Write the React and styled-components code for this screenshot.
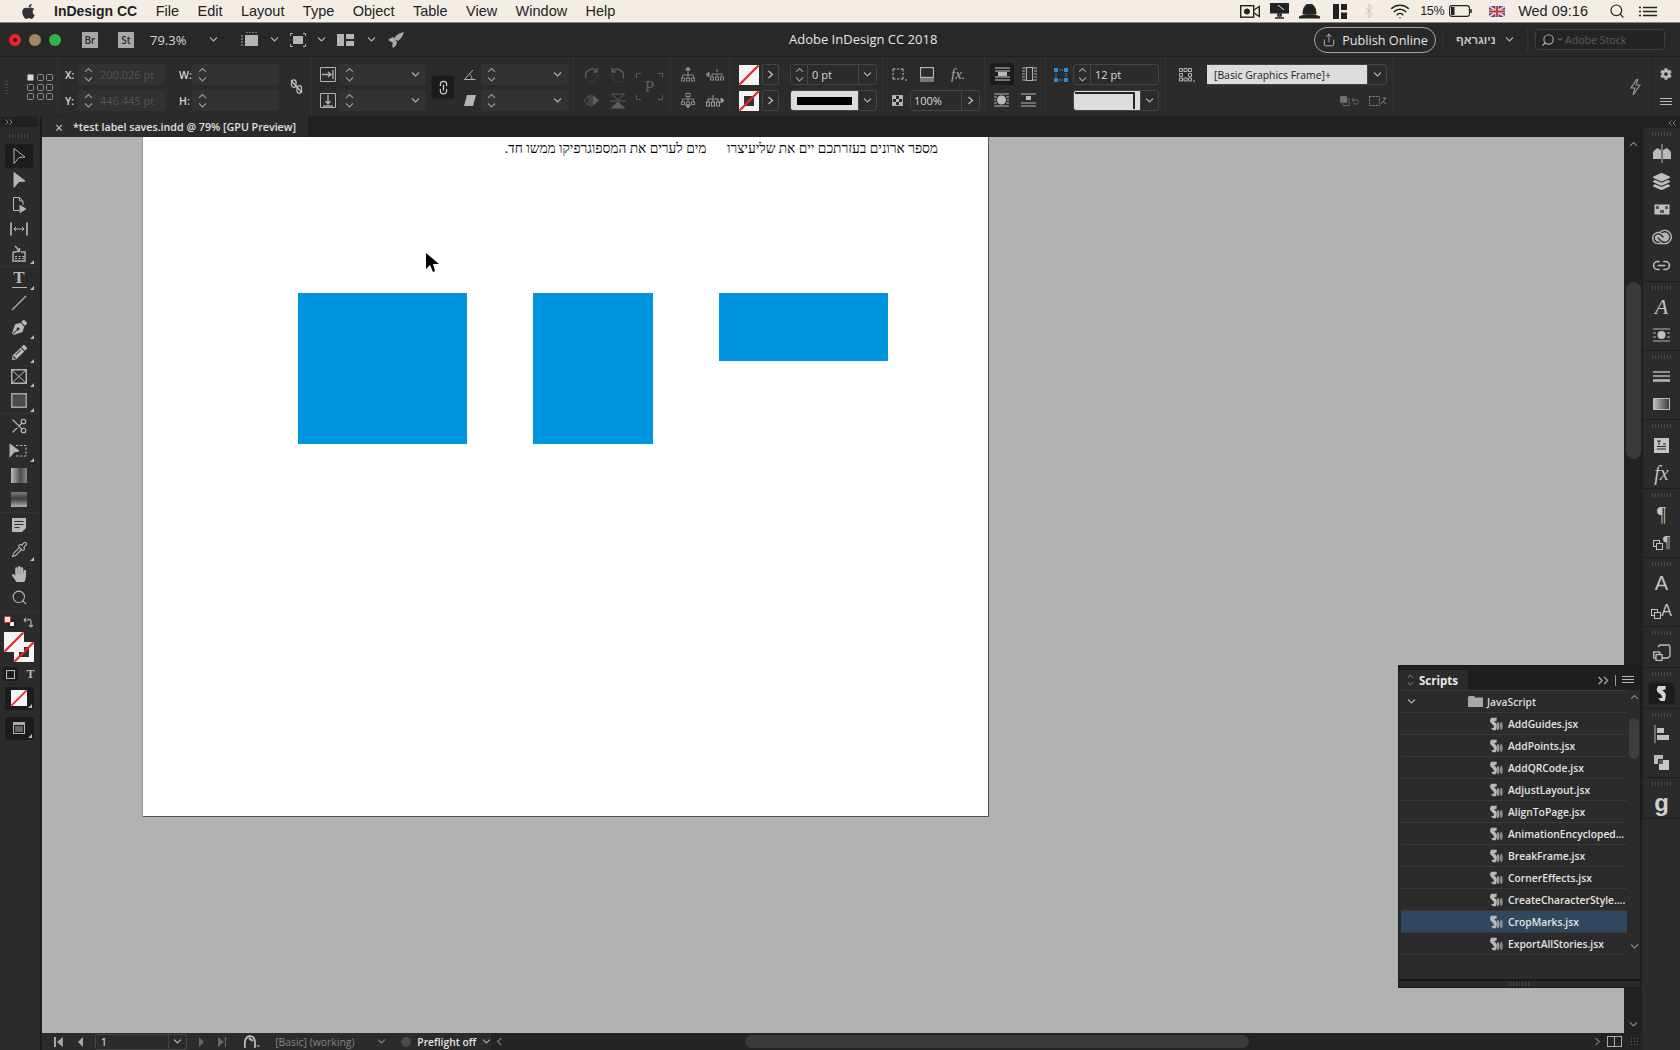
import React from "react";
import styled, { createGlobalStyle } from "styled-components";
import { FaApple, FaCog, FaHandPaper, FaPenNib, FaPencilAlt, FaLayerGroup } from "react-icons/fa";
import { SiAdobecreativecloud } from "react-icons/si";
import { Bluetooth, Link2, Pipette, Scissors, Search, Share, Wifi } from "lucide-react";

const Global = createGlobalStyle`
    html, body { margin: 0; padding: 0; background: #2b2b2b; }
    body { font-family: "Open Sans", "Liberation Sans", sans-serif; overflow: hidden; }
    * { box-sizing: border-box; }
`;

const Caret = ({ dir = "down", c = "#b0b0b0", s = 9 }) => {
    const pts = { down: "1,1.5 4.5,5 8,1.5", up: "1,5 4.5,1.5 8,5", right: "2.5,0.5 6.5,4 2.5,7.5", left: "6.5,0.5 2.5,4 6.5,7.5" };
    const box = dir === "left" || dir === "right" ? "0 0 9 8" : "0 0 9 6.5";
    return <svg width={s} height={dir === "left" || dir === "right" ? s : s * 0.72} viewBox={box} fill="none" stroke={c} strokeWidth="1.1"><polyline points={pts[dir]} /></svg>;
};

const Ic = ({ w = 16, h = 16, vb, c = "#b4b4b4", children }) => (
    <svg width={w} height={h} viewBox={vb || `0 0 ${w} ${h}`} fill="none" stroke={c} strokeWidth="1">{children}</svg>
);

const DoubleCaret = ({ left, w = 8, h = 6, c = "#8a8a8a" }) => (
    <Ic w={w} h={h} vb="0 0 8 6" c={c}>
        <path d={left ? "M3.5 .5L1 3L3.5 5.5M7.5 .5L5 3L7.5 5.5" : "M.5 .5L3 3L.5 5.5M4.5 .5L7 3L4.5 5.5"} strokeWidth=".9" />
    </Ic>
);

const Spin = () => <SpinBox><Caret dir="up" c="#9a9a9a" /><Caret c="#9a9a9a" /></SpinBox>;

const Ham = ({ w = 12 }) => (
    <Ic w={w} h={8} vb="0 0 12 8" c="#b8b8b8"><path d="M0 .5h12M0 3.5h12M0 6.5h12" /></Ic>
);

const NoFill = ({ size = 20, inner }) => (
    <Swatch $size={size}>
        {inner && <SwatchInner />}
        <svg width={size} height={size} viewBox="0 0 20 20"><line x1="0.5" y1="19.5" x2="19.5" y2="0.5" stroke="#e8262b" strokeWidth="2.2" /></svg>
    </Swatch>
);

const scriptBlob = "M5 1 L14 1 L14 5 L10 6 C13 8 15 11 14 14 L13 19 L8 19 L5 16 L10 15 C10 12 6 10 4 8 C3 6 3 3 5 1Z";

const ScriptIcon = () => (
    <svg width="15" height="14" viewBox="0 0 15 14" fill="#b8b8b8">
        <path d={scriptBlob} transform="scale(.62 .7)" />
        <ellipse cx="10" cy="9" rx="1.4" ry="4" opacity=".8" />
        <ellipse cx="13.3" cy="9" rx="1.3" ry="4" opacity=".7" />
    </svg>
);

const Folder = () => (
    <svg width="15" height="11" viewBox="0 0 15 11" fill="#a8a8a8"><path d="M0 1.5 L0 11 L15 11 L15 1.5 L7 1.5 L6 0 L1 0 Z" /></svg>
);

const Flag = () => (
    <svg width="16" height="11" viewBox="0 0 16 11">
        <rect width="16" height="11" fill="#3a4a85" />
        <path d="M0 0L16 11M16 0L0 11" stroke="#e8c8c8" strokeWidth="2" />
        <path d="M8 0v11M0 5.5h16" stroke="#e8e0e0" strokeWidth="3.4" />
        <path d="M8 0v11M0 5.5h16" stroke="#c8303a" strokeWidth="1.8" />
    </svg>
);

const menus = ["File", "Edit", "Layout", "Type", "Object", "Table", "View", "Window", "Help"];

const scripts = ["AddGuides.jsx", "AddPoints.jsx", "AddQRCode.jsx", "AdjustLayout.jsx", "AlignToPage.jsx", "AnimationEncycloped...", "BreakFrame.jsx", "CornerEffects.jsx", "CreateCharacterStyle....", "CropMarks.jsx", "ExportAllStories.jsx"];

const getToolGroups = () => [
    [
        { el: <Ic w={18} h={20} vb="0 0 18 20"><path d="M4 2.5 L15 11 L9 11.5 L4 17.5 Z" /></Ic>, on: true },
        { el: <Ic w={18} h={20} vb="0 0 18 20"><path d="M4 2.5 L15 11 L9 11.5 L4 17.5 Z" fill="#b4b4b4" /></Ic> },
        { el: <Ic w={18} h={18} vb="0 0 18 18"><path d="M9 14.5H3.5V1.5H9.5L13 5V9M9.5 1.5V5H13" /><path d="M10 9.5 L16 13 L10 16.5 Z" fill="#b4b4b4" /></Ic> },
        { el: <Ic w={20} h={16} vb="0 0 20 16" c="#bbb"><path d="M2 1.5V14.5M18 1.5V14.5" strokeWidth="1.6" /><path d="M5 8H15M7 6L5 8L7 10M13 6L15 8L13 10" /></Ic> },
        { el: <Ic w={16} h={17} vb="0 0 16 17"><path d="M2 7V16H14V7H10M2 7H5" strokeWidth="1.4" /><path d="M4 1 L8.5 6M8.5 3V6.5H5" strokeWidth="1.3" /><path d="M4 11.5h2M7.5 11.5h2M11 11.5h2M4 13.5h2M7.5 13.5h2M11 13.5h2" strokeWidth="1.2" /></Ic>, corner: true },
    ],
    [
        { el: <TypeT>T<TypeLine /></TypeT>, corner: true },
        { el: <Ic w={16} h={16} vb="0 0 16 16"><line x1="1" y1="15" x2="15" y2="1" strokeWidth="1.2" /></Ic> },
        { el: <FaPenNib size={15} color="#b8b8b8" />, corner: true },
        { el: <FaPencilAlt size={15} color="#b8b8b8" />, corner: true },
        { el: <Ic w={16} h={15} vb="0 0 16 15" c="#bbb"><rect x=".75" y=".75" width="14.5" height="13.5" strokeWidth="1.4" /><path d="M1 1L15 14M15 1L1 14" /></Ic>, corner: true },
        { el: <Ic w={16} h={15} vb="0 0 16 15" c="#aaa"><rect x=".75" y=".75" width="14.5" height="13.5" strokeWidth="1.4" fill="#4c4c4c" /></Ic>, corner: true },
    ],
    [
        { el: <ScissorsIcon size={18} color="#bbb" strokeWidth={1.6} /> },
        { el: <Ic w={20} h={16} vb="0 0 20 16"><path d="M1 1 L10 8 L5 9 L1 14 Z" fill="#b4b4b4" /><path d="M7 2.5H17V13H6" strokeDasharray="2.5 1.5" /></Ic>, corner: true },
        { el: <GradientBox /> },
        { el: <FeatherBox /> },
    ],
    [
        { el: <Ic w={14} h={14} vb="0 0 14 14" c="#2b2b2b"><path d="M0 0H14V10L10 14H0Z" fill="#b8b8b8" stroke="none" /><path d="M2.5 3.5h9M2.5 6.5h9M2.5 9.5h5" /></Ic> },
        { el: <Pipette size={17} color="#b8b8b8" strokeWidth={1.5} />, corner: true },
        { el: <FaHandPaper size={16} color="#b8b8b8" /> },
        { el: <Search size={17} color="#b8b8b8" strokeWidth={1.5} /> },
    ],
];

const getDockGroups = () => [
    { h: 154, icons: [
        <Ic w={18} h={19} vb="0 0 18 19"><path d="M0 8 L4 4 L8 6 V15 H0Z M18 8 L14 4 L10 6 V15 H18Z" fill="#bbb" stroke="none" /><path d="M9 0V19" /></Ic>,
        <FaLayerGroup size={17} color="#c0c0c0" />,
        <Ic w={16} h={11} vb="0 0 16 11"><rect x=".5" y=".5" width="15" height="10" fill="#c0c0c0" stroke="none" /><path d="M2 2h3v3h-3zM11 2h3v3h-3zM6 6h4v3h-4z" fill="#555" stroke="none" /></Ic>,
        <SiAdobecreativecloud size={20} color="#b4b4b4" />,
        <Link2 size={19} color="#c0c0c0" />,
    ] },
    { h: 69, icons: [<ItalicA>A</ItalicA>, <Ic w={17} h={14} vb="0 0 17 14"><path d="M0 1h17M0 13h17M0 5h3M14 5h3M0 9h3M14 9h3" /><circle cx="8.5" cy="7" r="4" fill="#c0c0c0" stroke="none" /></Ic>] },
    { h: 69, icons: [<Ic w={17} h={11} vb="0 0 17 11"><path d="M0 1h17M0 5h17" strokeWidth="1.3" /><path d="M0 9.5h17" strokeWidth="2.6" /></Ic>, <DockGradient />] },
    { h: 69, icons: [<Ic w={15} h={15} vb="0 0 15 15"><rect width="15" height="15" fill="#c4c4c4" stroke="none" /><path d="M3 3h4M5 3v4M9 6h3M3 8.5h9M3 11h9" stroke="#222" /></Ic>, <FxMark>fx</FxMark>] },
    { h: 69, icons: [<DockGlyph>¶</DockGlyph>, <DockCombo><Ic w={10} h={10} vb="0 0 10 10" c="#c0c0c0"><rect x=".5" y=".5" width="6" height="6" /><rect x="3.5" y="3.5" width="6" height="6" fill="#2b2b2b" /></Ic><DockGlyph $small>¶</DockGlyph></DockCombo>] },
    { h: 69, icons: [<DockGlyph $sans>A</DockGlyph>, <DockCombo><Ic w={10} h={10} vb="0 0 10 10" c="#c0c0c0"><rect x=".5" y=".5" width="6" height="6" /><rect x="3.5" y="3.5" width="6" height="6" fill="#2b2b2b" /></Ic><DockGlyph $sans $small>A</DockGlyph></DockCombo>] },
    { h: 41, icons: [<Ic w={18} h={17} vb="0 0 18 17" c="#c0c0c0"><path d="M5 3 L7 1H16L17 3V12L15 14H8" strokeWidth="1.3" /><rect x=".7" y="8" width="6" height="6" strokeWidth="1.3" /><rect x="3" y="10.5" width="6" height="6" strokeWidth="1.3" fill="#2b2b2b" /></Ic>] },
    { h: 41, icons: [<ScriptBox><svg width="15" height="17" viewBox="0 0 18 20" fill="#d4d4d4"><path d={scriptBlob} /></svg></ScriptBox>] },
    { h: 69, icons: [<Ic w={16} h={18} vb="0 0 16 18"><path d="M1 0V18" /><path d="M3 3h7v5H3zM3 10h12v5H3z" fill="#c0c0c0" stroke="none" /></Ic>, <Ic w={15} h={15} vb="0 0 15 15"><path d="M0 0h9v4H4v5H0z" fill="#b8b8b8" stroke="none" /><path d="M5 5h10v10H5z" fill="#c8c8c8" stroke="none" /><path d="M5 5h4v4H5z" fill="#555" stroke="none" /></Ic>] },
    { h: 41, icons: [<BigG>g</BigG>] },
];

export default function App() {
    const toolGroups = getToolGroups();
    const dockGroups = getDockGroups();
    return (
        <Root>
            <Global />
            <MenuBar>
                <FaApple size={17} color="#333" />
                <AppName>InDesign CC</AppName>
                {menus.map((m) => <MenuItem key={m}>{m}</MenuItem>)}
                <MenuRight>
                    <Ic w={20} h={15} vb="0 0 20 15" c="#222"><rect x=".7" y="1.7" width="13" height="11.5" strokeWidth="1.4" /><circle cx="7" cy="7.5" r="2.6" fill="#222" /><path d="M14 6L19.3 2.5V12.5L14 9" strokeWidth="1.4" /></Ic>
                    <Ic w={19} h={16} vb="0 0 19 16" c="#222"><path d="M0 0H19V10H0Z" fill="#222" /><path d="M8 13H11V11H8ZM5 15H14" strokeWidth="1.6" /><path d="M8 2L14 7" stroke="#eee" /></Ic>
                    <HatSlot><Ic w={21} h={15} vb="0 0 21 15" c="#222"><path d="M4 10 C4 3 7 0 10.5 0 S17 3 17 10Z M0 13 C5 10 16 10 21 13 L21 14 H0Z" fill="#222" /></Ic></HatSlot>
                    <Ic w={14} h={15} vb="0 0 14 15" c="#222"><path d="M0 0H6V15H0ZM8 0H14V6H8ZM8 8.5H14V15H8Z" fill="#222" stroke="none" /></Ic>
                    <BtSlot><Bluetooth size={16} color="#bbb" strokeWidth={1.3} /></BtSlot>
                    <WifiSlot><Wifi size={20} color="#222" strokeWidth={1.8} /></WifiSlot>
                    <MenuStatus>15%</MenuStatus>
                    <Ic w={23} h={12} vb="0 0 23 12" c="#222"><rect x=".6" y=".6" width="19.8" height="10.8" rx="2.5" strokeWidth="1.1" /><rect x="2" y="2" width="3.5" height="8" fill="#222" stroke="none" /><path d="M22 4v4" strokeWidth="1.5" /></Ic>
                    <FlagSlot><Flag /></FlagSlot>
                    <Clock>Wed 09:16</Clock>
                    <MenuSearch><Search size={16} color="#222" strokeWidth={1.8} /></MenuSearch>
                    <Ic w={18} h={11} vb="0 0 18 11" c="#222"><path d="M0 1.5h2M4 1.5h14M0 5.5h2M4 5.5h14M0 9.5h2M4 9.5h14" strokeWidth="1.7" /></Ic>
                </MenuRight>
            </MenuBar>

            <AppBar>
                <Light $c="#e8262b"><LightDot /></Light>
                <Light $c="#a08a63" />
                <Light $c="#2fb344" />
                <AppBadge $left={13}>Br</AppBadge>
                <AppBadge $left={20}>St</AppBadge>
                <Zoom>79.3%</Zoom>
                <BarCaret $w={55}><Caret /></BarCaret>
                <Ic w={17} h={15} vb="0 0 17 15"><path d="M4 3h13v11H4z" fill="#b4b4b4" stroke="none" /><path d="M0 4h2M0 7h2M0 10h2M0 13h2M6 1V0M9 1V0M12 1V0M15 1V0" strokeWidth="1.2" /></Ic>
                <BarCaret $w={32}><Caret /></BarCaret>
                <Ic w={16} h={14} vb="0 0 16 14"><path d="M.5 3V.5H3M13 .5h2.5V3M.5 11v2.5H3M13 13.5h2.5V11" /><rect x="3" y="3" width="10" height="8" fill="#b4b4b4" stroke="none" /></Ic>
                <BarCaret $w={31}><Caret /></BarCaret>
                <Ic w={17} h={12} vb="0 0 17 12"><path d="M0 0H7V12H0ZM9 0H17V5H9ZM9 7H17V12H9Z" fill="#b4b4b4" stroke="none" /></Ic>
                <BarCaret $w={34}><Caret /></BarCaret>
                <Ic w={16} h={16} vb="0 0 16 16"><path d="M16 0C11 1 8 3 6 7L10 9C13 7 15 4 16 0ZM5 5C3 6 1 7 0 8L5 11C4 12 4 14 5 16C8 14 9 12 9 10Z" fill="#a8a8a8" stroke="none" /></Ic>
                <Title>Adobe InDesign CC 2018</Title>
                <PublishBtn><Share size={14} color="#ccc" strokeWidth={1.4} />Publish Online</PublishBtn>
                <BarDivider />
                <Workspace>ניוגראף</Workspace>
                <BarCaret $w={23}><Caret /></BarCaret>
                <BarDivider />
                <StockBox><StockLens size={14} color="#aaa" /><Caret s={6} />Adobe Stock</StockBox>
            </AppBar>

            <ControlPanel>
                <Section $w={58}>
                    <Grip />
                    <RefGrid>{Array.from({ length: 9 }).map((_, i) => <RefDot key={i} $on={i === 0} />)}</RefGrid>
                </Section>
                <Section $w={254} $top={7}>
                    <Stack>
                        <Row><FieldLabel>X:</FieldLabel><Field $w={87}><Spin /><FieldGhost>200.026 pt</FieldGhost></Field></Row>
                        <Row><FieldLabel>Y:</FieldLabel><Field $w={87}><Spin /><FieldGhost>446.445 pt</FieldGhost></Field></Row>
                    </Stack>
                    <Stack $ml={7}>
                        <Row><FieldLabel>W:</FieldLabel><Field $w={87}><Spin /></Field></Row>
                        <Row><FieldLabel>H:</FieldLabel><Field $w={87}><Spin /></Field></Row>
                    </Stack>
                    <MidIcon $ml={11}>
                        <Ic w={13} h={15} vb="0 0 13 15" c="#c4c4c4"><rect x="1.5" y=".8" width="4.5" height="7.5" rx="2.2" strokeWidth="1.2" /><rect x="7" y="6.7" width="4.5" height="7.5" rx="2.2" strokeWidth="1.2" /><path d="M1 1.5L12 13.5" strokeWidth="1.3" /></Ic>
                    </MidIcon>
                </Section>
                <Section $w={262} $top={7}>
                    <Stack $ml={8}>
                        <Row>
                            <Ic w={16} h={15} vb="0 0 16 15"><path d="M.5.5h15v14H.5z" /><path d="M2 7.5h9M8 5l3 2.5L8 10" strokeWidth="1.3" /><path d="M13 3v9" strokeWidth="2" stroke="#888" /></Ic>
                            <Field $w={87} $ml={3} $between><Spin /><FieldCaret><Caret /></FieldCaret></Field>
                        </Row>
                        <Row>
                            <Ic w={16} h={15} vb="0 0 16 15"><path d="M.5.5h15v14H.5z" /><path d="M8 2v9M5.5 8L8 11l2.5-3" strokeWidth="1.3" /><path d="M3 13h10" strokeWidth="2" stroke="#888" /></Ic>
                            <Field $w={87} $ml={3} $between><Spin /><FieldCaret><Caret /></FieldCaret></Field>
                        </Row>
                    </Stack>
                    <LinkBtn><LinkIcon size={15} color="#ccc" /></LinkBtn>
                    <Stack $ml={9}>
                        <Row>
                            <Ic w={12} h={11} vb="0 0 12 11"><path d="M11.5 10.5H.5L9 1M6 5.5C7.5 6.5 8 8.5 8 10.5" /></Ic>
                            <Field $w={87} $ml={5} $between><Spin /><FieldCaret><Caret /></FieldCaret></Field>
                        </Row>
                        <Row>
                            <Ic w={12} h={11} vb="0 0 12 11"><path d="M3 0H12L9 11H0Z" fill="#b4b4b4" stroke="none" /></Ic>
                            <Field $w={87} $ml={5} $between><Spin /><FieldCaret><Caret /></FieldCaret></Field>
                        </Row>
                    </Stack>
                </Section>
                <Section $w={97} $top={7}>
                    <Stack $ml={9}>
                        <Row $gap={11}>
                            <Ic w={16} h={16} vb="0 0 16 16" c="#5c5c5c"><path d="M3 11A6.5 6.5 0 0 1 14 4.5M14 1V5H10" strokeWidth="1.4" /><path d="M14 8A6.5 6.5 0 0 1 4 14" strokeDasharray="1 1.5" /></Ic>
                            <Ic w={16} h={16} vb="0 0 16 16" c="#5c5c5c"><path d="M13 11A6.5 6.5 0 0 0 2 4.5M2 1V5H6" strokeWidth="1.4" /><path d="M2 8A6.5 6.5 0 0 0 12 14" strokeDasharray="1 1.5" /></Ic>
                        </Row>
                        <Row $gap={11}>
                            <Ic w={16} h={13} vb="0 0 16 13" c="#5c5c5c"><path d="M6 1.5V11.5L0.7 6.5ZM8 0V13" /><path d="M10 1.5V11.5L15.5 6.5Z" fill="#5c5c5c" /></Ic>
                            <Ic w={16} h={16} vb="0 0 16 16" c="#5c5c5c"><path d="M1.5 1H14.5L8 7ZM0 8H16" /><path d="M1.5 15H14.5L8 9Z" fill="#5c5c5c" /></Ic>
                        </Row>
                    </Stack>
                    <Pivot>P</Pivot>
                </Section>
                <Section $w={59} $top={7}>
                    <Stack $ml={10}>
                        <Row $gap={11}>
                            <Ic w={14} h={15} vb="0 0 14 15" c="#888"><path d="M7 0L4.5 3H9.5Z" fill="#888" /><path d="M7 3V8M1.5 11V8H12.5V11M7 8V11" /><rect x=".5" y="11" width="3" height="3" /><rect x="5.5" y="11" width="3" height="3" /><rect x="10.5" y="11" width="3" height="3" /></Ic>
                            <Ic w={18} h={13} vb="0 0 18 13" c="#888"><path d="M0 6.5L3 4V9Z" fill="#888" /><path d="M11 1V4M6 9V6H16V9M11 6V9" /><rect x="4.5" y="9" width="3" height="3" /><rect x="9.5" y="9" width="3" height="3" /><rect x="14.5" y="9" width="3" height="3" /></Ic>
                        </Row>
                        <Row $gap={11}>
                            <Ic w={14} h={15} vb="0 0 14 15" c="#888"><path d="M7 15L4.5 12H9.5Z" fill="#888" /><rect x="5" y=".5" width="4" height="3" /><path d="M7 3V6M1.5 9V6H12.5V9M7 6V9" /><rect x=".5" y="9" width="3" height="2.5" /><rect x="5.5" y="9" width="3" height="2.5" /><rect x="10.5" y="9" width="3" height="2.5" /></Ic>
                            <Ic w={18} h={13} vb="0 0 18 13" c="#a0a0a0"><path d="M18 6.5L15 4V9Z" fill="#a0a0a0" /><path d="M7 1V4M2 8V5H12V8M7 5V8" /><rect x=".5" y="8" width="3" height="4" /><rect x="5.5" y="8" width="3" height="4" /><rect x="10.5" y="8" width="3" height="4" /></Ic>
                        </Row>
                    </Stack>
                </Section>
                <Section $w={153} $top={7}>
                    <Stack $ml={9}>
                        <Row><NoFill size={20} /><ArrowBtn><Caret dir="right" c="#ccc" /></ArrowBtn></Row>
                        <Row><NoFill size={20} inner /><ArrowBtn><Caret dir="right" c="#ccc" /></ArrowBtn></Row>
                    </Stack>
                    <Stack $ml={11}>
                        <Row>
                            <BoxField $w={87}>
                                <BoxSpin><Spin /></BoxSpin>
                                <BoxValue>0 pt</BoxValue>
                                <BoxCaret><Caret /></BoxCaret>
                            </BoxField>
                        </Row>
                        <Row>
                            <BoxField $w={87}>
                                <StrokeSwatch><StrokeLine /></StrokeSwatch>
                                <BoxCaret><Caret /></BoxCaret>
                            </BoxField>
                        </Row>
                    </Stack>
                </Section>
                <Section $w={102} $top={7}>
                    <Stack $ml={9}>
                        <Row $gap={13}>
                            <Ic w={15} h={14} vb="0 0 15 14" c="#c4c4c4"><path d="M1 3.5V1H3.5M8.5 1H11V3.5M1 8.5V11H3.5M8.5 11H11V8.5" /><path d="M5 1h2M5 11h2M1 5v2M11 5v2" /><path d="M13 12h2" /></Ic>
                            <Ic w={14} h={15} vb="0 0 14 15"><rect x=".5" y=".5" width="13" height="10" strokeWidth="1.3" /><rect y="11" width="14" height="4" fill="#777" stroke="none" /></Ic>
                            <FxText>fx<small>.</small></FxText>
                        </Row>
                        <Row>
                            <Ic w={11} h={11} vb="0 0 11 11" c="#aaa"><rect x=".5" y=".5" width="10" height="10" /><path d="M1 1h3v3H1zM7 1h3v3H7zM4 4h3v3H4zM1 7h3v3H1zM7 7h3v3H7z" fill="#bbb" stroke="none" /></Ic>
                            <BoxField $w={70} $ml={7}>
                                <OpacityValue>100%</OpacityValue>
                                <BoxCaret $w={18}><Caret dir="right" c="#ccc" /></BoxCaret>
                            </BoxField>
                        </Row>
                    </Stack>
                </Section>
                <Section $w={61} $top={6}>
                    <Stack $ml={5}>
                        <Row $gap={8}>
                            <WrapBtn><Ic w={15} h={14} vb="0 0 15 14" c="#ccc"><path d="M0 1h15M0 13h15M0 4h15M0 10h15" /><rect x="3" y="5" width="9" height="4" fill="#bbb" stroke="none" /></Ic></WrapBtn>
                            <Ic w={15} h={14} vb="0 0 15 14"><path d="M0 1h4M11 1h4M0 13h4M11 13h4M0 4h3M12 4h3M0 7h3M12 7h3M0 10h3M12 10h3" /><rect x="4.5" y=".5" width="6" height="13" /></Ic>
                        </Row>
                        <Row $gap={12}>
                            <WrapIcon><Ic w={15} h={14} vb="0 0 15 14"><path d="M0 1h15M0 13h15M0 4h3M12 4h3M0 7h2M13 7h2M0 10h3M12 10h3" /><circle cx="7.5" cy="7" r="4.5" fill="#bbb" stroke="none" /></Ic></WrapIcon>
                            <Ic w={15} h={14} vb="0 0 15 14"><path d="M0 1h15M0 13h15M0 10h15" /><rect x="5" y="3" width="5" height="4" fill="#bbb" stroke="none" /></Ic>
                        </Row>
                    </Stack>
                </Section>
                <Section $w={120} $top={7}>
                    <Stack $ml={8}>
                        <Row>
                            <Ic w={14} h={14} vb="0 0 14 14" c="#3d9be0"><path d="M0 0h4v4H0zM10 0h4v4h-4zM0 10h4v4H0zM10 10h4v4h-4z" fill="#2d8ad6" stroke="none" /><path d="M5 2h4M5 12h4M2 5v4M12 5v4" strokeDasharray="1.5 1" /></Ic>
                            <BoxField $w={86} $ml={5}>
                                <BoxSpin><Spin /></BoxSpin>
                                <BoxValue>12 pt</BoxValue>
                            </BoxField>
                        </Row>
                        <Row $pl={19}>
                            <BoxField $w={86}>
                                <CornerSwatch><CornerLine /></CornerSwatch>
                                <BoxCaret><Caret /></BoxCaret>
                            </BoxField>
                        </Row>
                    </Stack>
                </Section>
                <Section $w={227} $top={7}>
                    <Stack $ml={13}>
                        <Row>
                            <Ic w={16} h={14} vb="0 0 16 14"><path d="M.5.5h3v3h-3zM5 .5h3v3H5zM9.5.5h3v3h-3zM.5 5.5h3v3h-3zM9.5 5.5h3v3h-3zM.5 10h3v3h-3zM5 10h3v3H5zM9.5 10h3v3h-3z" /><path d="M14 13h2" /></Ic>
                            <StyleSelect>
                                <StyleValue>[Basic Graphics Frame]+</StyleValue>
                                <BoxCaret $w={19}><Caret /></BoxCaret>
                            </StyleSelect>
                        </Row>
                        <Row $end>
                            <Ic w={20} h={10} vb="0 0 20 10" c="#666"><rect x=".5" y=".5" width="6" height="6" fill="#777" /><rect x="3" y="3" width="6" height="6.5" /><path d="M12 4H17C19 4 19 8 17 8H13M14 2L12 4L14 6" /></Ic>
                            <IconGap><Ic w={18} h={10} vb="0 0 18 10" c="#888"><path d="M.5.5h10v9H.5z" strokeDasharray="2 1" /><path d="M12 8L17 2M14 2h3M14 5l3 3" /></Ic></IconGap>
                        </Row>
                    </Stack>
                </Section>
                <Section $w={259} $top={7} $end $plain>
                    <LightningSlot>
                        <Ic w={11} h={16} vb="0 0 11 16" c="#999"><path d="M7 0L1 9H5L3 16L10 6H6L8 0" strokeWidth="1.1" /></Ic>
                    </LightningSlot>
                </Section>
                <SideActions>
                    <FaCog size={12} color="#b8b8b8" />
                    <Ham />
                </SideActions>
            </ControlPanel>

            <Body>
                <ToolColumn>
                    <ColumnHead><DoubleCaret /></ColumnHead>
                    <GripRow><Grip $h /></GripRow>
                    {toolGroups.map((group, g) => (
                        <ToolGroup key={g}>
                            {group.map((t, i) => <Tool key={i} $on={t.on} $corner={t.corner}>{t.el}</Tool>)}
                        </ToolGroup>
                    ))}
                    <SmallRow>
                        <DefaultColors><MiniStroke /><MiniFill /></DefaultColors>
                        <Ic w={12} h={12} vb="0 0 12 12" c="#aaa"><path d="M1 4H6V4M1 4L3 2M1 4L3 6M8 5V11M8 11L6 9M8 11L10 9M5 3C7 3 8 4 8 6" strokeWidth="1.2" /></Ic>
                    </SmallRow>
                    <SwatchStack>
                        <SwatchBack><NoFill size={20} inner /></SwatchBack>
                        <SwatchFront><NoFill size={20} /></SwatchFront>
                    </SwatchStack>
                    <FormatRow>
                        <FormatBtn><Ic w={9} h={9} vb="0 0 9 9"><rect x=".5" y=".5" width="8" height="8" strokeWidth="1.2" /></Ic></FormatBtn>
                        <FormatT>T</FormatT>
                    </FormatRow>
                    <WellBtn><NoFill size={16} /></WellBtn>
                    <WellBtn $mt={7}>
                        <Ic w={12} h={12} vb="0 0 12 12"><rect x=".5" y=".5" width="11" height="11" /><rect x="0" y="0" width="12" height="3" fill="#aaa" stroke="none" /><rect x="2" y="4" width="8" height="6" fill="#666" stroke="none" /></Ic>
                    </WellBtn>
                </ToolColumn>

                <Center>
                    <TabRow>
                        <Tab><TabClose>×</TabClose>*test label saves.indd @ 79% [GPU Preview]</Tab>
                    </TabRow>
                    <CanvasRow>
                        <Pasteboard>
                            <Page>
                                <PageText dir="rtl">מספר ארונים בעזרתכם יים את שליעיצרו&nbsp;&nbsp;&nbsp;&nbsp;&nbsp; מים לערים את המספוגרפיקו ממשו חד.</PageText>
                                <Shapes>
                                    <Shape $w={169} $h={151} />
                                    <Shape $w={120} $h={151} />
                                    <Shape $w={169} $h={68} />
                                </Shapes>
                            </Page>
                        </Pasteboard>
                        <VScroll>
                            <Caret dir="up" c="#888" />
                            <VThumb />
                            <Caret c="#888" />
                        </VScroll>
                    </CanvasRow>
                    <StatusBar>
                        <StatusLeft>
                            <Ic w={9} h={10} vb="0 0 9 10"><path d="M0 0h2v10H0zM9 0v10L3 5z" fill="#a8a8a8" stroke="none" /></Ic>
                            <StatusGap $w={15} />
                            <Ic w={5} h={10} vb="0 0 5 10"><path d="M5 0v10L0 5z" fill="#a8a8a8" stroke="none" /></Ic>
                            <StatusGap $w={12} />
                            <PageField>1<PageCaret><Caret /></PageCaret></PageField>
                            <StatusGap $w={12} />
                            <Ic w={5} h={10} vb="0 0 5 10"><path d="M0 0v10l5-5z" fill="#666" stroke="none" /></Ic>
                            <StatusGap $w={14} />
                            <Ic w={9} h={10} vb="0 0 9 10"><path d="M0 0v10l6-5zM7 0h2v10H7z" fill="#666" stroke="none" /></Ic>
                            <StatusGap $w={18} />
                            <Ic w={16} h={13} vb="0 0 16 13" c="#c0c0c0"><path d="M1 13C0 6 2 1 6 1S12 4 11 13" strokeWidth="1.8" /><path d="M5 3L9 6" strokeWidth="2" /><path d="M13 11h3" /></Ic>
                            <StatusDim>[Basic] (working)</StatusDim>
                            <StatusGap $w={23} />
                            <Caret c="#888" />
                            <StatusGap $w={15} />
                            <StatusDot />
                            <StatusStrong>Preflight off</StatusStrong>
                            <StatusGap $w={6} />
                            <Caret />
                        </StatusLeft>
                        <ScrollLeft><Caret dir="left" c="#777" /></ScrollLeft>
                        <HTrack><HThumb /></HTrack>
                        <Caret dir="right" c="#777" />
                        <SplitIcon><Ic w={15} h={11} vb="0 0 15 11" c="#aaa"><rect x=".5" y=".5" width="14" height="10" /><path d="M7.5 0v11" /></Ic></SplitIcon>
                        <ResizeDots />
                    </StatusBar>
                </Center>

                <Dock>
                    <DockHead><DoubleCaret left /></DockHead>
                    {dockGroups.map((group, g) => (
                        <DockGroup key={g} $h={group.h}>
                            <GripRow $small><Grip $h /></GripRow>
                            <DockIcons>
                                {group.icons.map((ic, i) => <DockIcon key={i}>{ic}</DockIcon>)}
                            </DockIcons>
                        </DockGroup>
                    ))}
                </Dock>
            </Body>

            <ScriptsPanel>
                <PanelHead>
                    <PanelTab>
                        <PanelSort><Caret dir="up" s={7} c="#999" /><Caret s={7} c="#999" /></PanelSort>
                        Scripts
                    </PanelTab>
                    <PanelActions>
                        <DoubleCaret w={11} h={9} c="#aaa" />
                        <PanelDivider />
                        <Ham />
                    </PanelActions>
                </PanelHead>
                <PanelBody>
                    <ScriptList>
                        <ScriptRow>
                            <RowCaret><Caret /></RowCaret>
                            <FolderSlot><Folder /></FolderSlot>
                            <FolderName>JavaScript</FolderName>
                        </ScriptRow>
                        {scripts.map((s) => (
                            <ScriptRow key={s} $sel={s === "CropMarks.jsx"}>
                                <ScriptSlot><ScriptIcon /></ScriptSlot>
                                <ScriptName>{s}</ScriptName>
                            </ScriptRow>
                        ))}
                    </ScriptList>
                    <ListScroll>
                        <Caret dir="up" c="#888" />
                        <ListThumb />
                        <Caret c="#888" />
                    </ListScroll>
                </PanelBody>
                <PanelBlank />
                <PanelFoot><Grip $h /></PanelFoot>
            </ScriptsPanel>

            <Cursor>
                <svg width="13" height="19" viewBox="0 0 13 19"><path d="M0 0L13 11H7L9 18L7 19L4 12L0 16Z" fill="#000" /></svg>
            </Cursor>
        </Root>
    );
}

const StockLens = styled(Search)`
    flex: none;
    transform: scaleX(-1);
`;

const ScissorsIcon = styled(Scissors)`
    transform: scaleX(-1);
`;

const LinkIcon = styled(Link2)`
    transform: rotate(90deg);
`;

const Root = styled.div`
    position: relative;
    display: flex;
    flex-direction: column;
    width: 1680px;
    height: 1050px;
    overflow: hidden;
    background: #2b2b2b;
`;

const MenuBar = styled.div`
    display: flex;
    align-items: center;
    height: 23px;
    padding: 0 23px 0 20px;
    background: #f3ede6;
    border-bottom: 1px solid #8a8682;
    font-family: "Liberation Sans", sans-serif;
    font-size: 14.5px;
    color: #222;
`;

const AppName = styled.span`
    margin: 0 18.5px 0 17px;
    font-size: 14px;
    font-weight: 700;
`;

const MenuItem = styled.span`
    margin-right: 18.4px;
`;

const MenuRight = styled.div`
    display: flex;
    align-items: center;
    gap: 10px;
    margin-left: auto;
`;

const HatSlot = styled.span`
    display: flex;
    margin-right: 3px;
`;

const BtSlot = styled.span`
    display: flex;
    margin: 0 3px 0 4px;
`;

const WifiSlot = styled.span`
    display: flex;
`;

const MenuStatus = styled.span`
    margin-right: -5px;
    font-size: 12.5px;
    letter-spacing: -0.4px;
`;

const FlagSlot = styled.span`
    display: flex;
    margin: 0 3px 0 7px;
`;

const Clock = styled.span`
    margin-right: 11px;
    font-size: 14.5px;
`;

const MenuSearch = styled.span`
    display: flex;
    margin-right: 4px;
`;

const AppBar = styled.div`
    display: flex;
    align-items: center;
    position: relative;
    height: 34px;
    padding: 0 15px 0 9px;
    background: #282828;
    border-bottom: 1px solid #1d1d1d;
`;

const Light = styled.span`
    display: flex;
    align-items: center;
    justify-content: center;
    width: 12px;
    height: 12px;
    margin-right: 8px;
    border-radius: 50%;
    background: ${(p) => p.$c};
`;

const LightDot = styled.span`
    width: 4px;
    height: 4px;
    border-radius: 50%;
    background: #5c0608;
`;

const AppBadge = styled.span`
    display: flex;
    align-items: center;
    justify-content: center;
    width: 16px;
    height: 16px;
    margin-left: ${(p) => p.$left}px;
    background: #a8a8a8;
    color: #2a2a2a;
    font-size: 10px;
    font-weight: 600;
`;

const Zoom = styled.span`
    width: 36px;
    margin-left: 16px;
    color: #d8d8d8;
    font-size: 13px;
    white-space: nowrap;
`;

const BarCaret = styled.span`
    display: flex;
    justify-content: center;
    flex: none;
    width: ${(p) => p.$w}px;
`;

const Title = styled.span`
    position: absolute;
    left: 789px;
    top: 7px;
    width: 148px;
    color: #e6e6e6;
    font-size: 13px;
    white-space: nowrap;
`;

const PublishBtn = styled.button`
    display: flex;
    align-items: center;
    justify-content: center;
    gap: 6px;
    width: 122px;
    height: 26px;
    margin-left: auto;
    padding: 0;
    background: transparent;
    border: 1px solid #a8a8a8;
    border-radius: 13px;
    color: #e6e6e6;
    font-family: inherit;
    font-size: 12.7px;
`;

const BarDivider = styled.span`
    width: 1px;
    height: 24px;
    margin: 0 6px;
    background: #333;
`;

const Workspace = styled.span`
    flex: none;
    margin-left: 7px;
    width: 42px;
    color: #c8c8c8;
    font-family: "Liberation Sans", sans-serif;
    font-size: 11.5px;
    font-weight: 700;
    white-space: nowrap;
`;

const StockBox = styled.div`
    display: flex;
    align-items: center;
    gap: 2px;
    width: 130px;
    height: 21px;
    margin-left: 1px;
    padding-left: 5px;
    border: 1px solid #3e3e3e;
    border-radius: 3px;
    background: #242424;
    color: #5e5e5e;
    font-size: 10.6px;
`;

const ControlPanel = styled.div`
    display: flex;
    height: 60px;
    background: #2b2b2b;
    border-bottom: 1px solid #262626;
`;

const Section = styled.div`
    display: flex;
    align-items: flex-start;
    position: relative;
    flex: none;
    width: ${(p) => p.$w}px;
    height: 58px;
    padding-top: ${(p) => p.$top || 0}px;
    border-right: ${(p) => (p.$plain ? "1px solid #262626" : "1px dotted #3a3a3a")};
    justify-content: ${(p) => (p.$end ? "flex-end" : "flex-start")};
`;

const Grip = styled.span`
    display: block;
    flex: none;
    background-image: repeating-linear-gradient(${(p) => (p.$h ? "90deg" : "0deg")}, #484848 0 1px, transparent 1px 3px);
    ${(p) => (p.$h ? "width: 20px; height: 4px;" : "width: 3px; height: 15px; margin: 22px 0 0 5px;")}
`;

const RefGrid = styled.div`
    display: grid;
    grid-template-columns: repeat(3, 7px);
    grid-auto-rows: 7px;
    gap: 2.5px;
    margin: 17px 0 0 19px;
`;

const RefDot = styled.span`
    border: 1px solid #8e8e8e;
    border-radius: 1.5px;
    background: ${(p) => (p.$on ? "#d8d8d8" : "transparent")};
`;

const Stack = styled.div`
    display: flex;
    flex-direction: column;
    gap: 5px;
    flex: none;
    margin-left: ${(p) => p.$ml || 0}px;
`;

const Row = styled.div`
    display: flex;
    align-items: center;
    height: 21px;
    gap: ${(p) => p.$gap || 0}px;
    padding-left: ${(p) => p.$pl || 0}px;
    justify-content: ${(p) => (p.$end ? "flex-end" : "flex-start")};
`;

const FieldLabel = styled.span`
    width: 20px;
    padding-left: 7px;
    color: #d4d4d4;
    font-size: 10.5px;
    font-weight: 600;
    white-space: nowrap;
`;

const Field = styled.div`
    display: flex;
    align-items: center;
    justify-content: ${(p) => (p.$between ? "space-between" : "flex-start")};
    width: ${(p) => p.$w}px;
    height: 21px;
    margin-left: ${(p) => p.$ml || 0}px;
    padding-left: 5px;
    background: #323232;
    border-radius: 2px;
`;

const SpinBox = styled.span`
    display: flex;
    flex-direction: column;
    align-items: center;
    gap: 3px;
    width: 10px;
`;

const FieldGhost = styled.span`
    margin-left: 7px;
    color: #525252;
    font-size: 11px;
    white-space: nowrap;
`;

const FieldCaret = styled.span`
    display: flex;
    padding-right: 6px;
`;

const MidIcon = styled.span`
    display: flex;
    margin: 15px 0 0 ${(p) => p.$ml}px;
`;

const LinkBtn = styled.span`
    display: flex;
    align-items: center;
    justify-content: center;
    flex: none;
    width: 24px;
    height: 24px;
    margin: 11px 0 0 5px;
    background: #1c1c1c;
    border: 1px solid #242424;
    border-radius: 3px;
`;

const Pivot = styled.span`
    display: flex;
    align-items: center;
    justify-content: center;
    width: 27px;
    height: 27px;
    margin: 9px 0 0 10px;
    color: #5e5e5e;
    font-family: "Liberation Serif", serif;
    font-size: 17px;
    background:
        linear-gradient(#5a5a5a, #5a5a5a) 0 0 / 5px 1px no-repeat,
        linear-gradient(#5a5a5a, #5a5a5a) 0 0 / 1px 5px no-repeat,
        linear-gradient(#5a5a5a, #5a5a5a) 100% 0 / 5px 1px no-repeat,
        linear-gradient(#5a5a5a, #5a5a5a) 100% 0 / 1px 5px no-repeat,
        linear-gradient(#5a5a5a, #5a5a5a) 0 100% / 5px 1px no-repeat,
        linear-gradient(#5a5a5a, #5a5a5a) 0 100% / 1px 5px no-repeat,
        linear-gradient(#5a5a5a, #5a5a5a) 100% 100% / 5px 1px no-repeat,
        linear-gradient(#5a5a5a, #5a5a5a) 100% 100% / 1px 5px no-repeat;
`;

const Swatch = styled.span`
    position: relative;
    display: block;
    flex: none;
    width: ${(p) => p.$size}px;
    height: ${(p) => p.$size}px;
    background: #f4f4f4;
    svg { display: block; position: absolute; left: 0; top: 0; }
`;

const SwatchInner = styled.span`
    position: absolute;
    left: 25%;
    top: 25%;
    width: 50%;
    height: 50%;
    background: #333;
`;

const ArrowBtn = styled.span`
    display: flex;
    align-items: center;
    justify-content: center;
    width: 17px;
    height: 21px;
    margin-left: 3px;
    border: 1px solid #444;
    border-radius: 2px;
`;

const BoxField = styled.div`
    display: flex;
    align-items: stretch;
    width: ${(p) => p.$w}px;
    height: 21px;
    margin-left: ${(p) => p.$ml || 0}px;
    border: 1px solid #444;
    border-radius: 3px;
    overflow: hidden;
`;

const BoxSpin = styled.span`
    display: flex;
    align-items: center;
    justify-content: center;
    flex: none;
    width: 17px;
    border-right: 1px solid #444;
`;

const BoxValue = styled.span`
    flex: 1;
    padding-left: 4px;
    color: #d8d8d8;
    font-size: 11px;
    line-height: 19px;
`;

const BoxCaret = styled.span`
    display: flex;
    align-items: center;
    justify-content: center;
    flex: none;
    width: ${(p) => p.$w || 18}px;
    border-left: 1px solid #444;
`;

const StrokeSwatch = styled.span`
    display: flex;
    align-items: center;
    justify-content: center;
    flex: 1;
    background: #dcdcdc;
`;

const StrokeLine = styled.span`
    width: 55px;
    height: 8px;
    background: #000;
`;

const FxText = styled.span`
    margin-left: 4px;
    color: #a8a8a8;
    font-family: "Liberation Serif", serif;
    font-size: 15px;
    font-style: italic;
    line-height: 1;
`;

const OpacityValue = styled.span`
    flex: 1;
    padding-left: 3px;
    color: #dcdcdc;
    font-size: 11px;
    line-height: 19px;
`;

const WrapBtn = styled.span`
    display: flex;
    align-items: center;
    justify-content: center;
    width: 24px;
    height: 22px;
    background: #1c1c1c;
    border-radius: 3px;
`;

const WrapIcon = styled.span`
    display: flex;
    margin-left: 4px;
`;

const CornerSwatch = styled.span`
    display: flex;
    justify-content: flex-end;
    align-items: flex-start;
    flex: 1;
    padding: 1px 5px 0 0;
    background: #dcdcdc;
`;

const CornerLine = styled.span`
    width: 60px;
    height: 17px;
    border-top: 2px solid #222;
    border-right: 2px solid #222;
`;

const StyleSelect = styled.div`
    display: flex;
    align-items: stretch;
    width: 180px;
    height: 21px;
    margin-left: 12px;
    border: 1px solid #444;
    border-left: none;
    border-radius: 0 3px 3px 0;
`;

const StyleValue = styled.span`
    flex: 1;
    padding-left: 7px;
    background: #dcdcdc;
    color: #222;
    font-size: 10.4px;
    line-height: 20px;
    white-space: nowrap;
`;

const IconGap = styled.span`
    display: flex;
    margin-left: 9px;
`;

const LightningSlot = styled.span`
    display: flex;
    margin: 15px 10px 0 0;
`;

const SideActions = styled.div`
    display: flex;
    flex-direction: column;
    align-items: center;
    gap: 18px;
    width: 28px;
    padding-top: 11px;
`;

const Body = styled.div`
    display: flex;
    flex: 1;
    min-height: 0;
`;

const ToolColumn = styled.div`
    display: flex;
    flex-direction: column;
    flex: none;
    align-items: center;
    width: 42px;
    padding-right: 2px;
    background: #2b2b2b;
    border-right: 2px solid #1c1c1c;
`;

const ColumnHead = styled.div`
    display: flex;
    align-items: center;
    align-self: stretch;
    height: 10px;
    padding-left: 5px;
    background: #212121;
`;

const GripRow = styled.div`
    display: flex;
    justify-content: center;
    align-items: center;
    align-self: stretch;
    height: ${(p) => (p.$small ? 11 : 17)}px;
`;

const ToolGroup = styled.div`
    display: flex;
    flex-direction: column;
    width: 36px;
    padding-bottom: 0.5px;
    border-bottom: 1px dotted #3c3c3c;
`;

const Tool = styled.div`
    position: relative;
    display: flex;
    align-items: center;
    justify-content: center;
    height: 24.3px;
    margin: 0 ${(p) => (p.$on ? 4 : 0)}px;
    background: ${(p) => (p.$on ? "#1c1c1c" : "transparent")};
    border-radius: 3px;
    &::after {
        content: "";
        display: ${(p) => (p.$corner ? "block" : "none")};
        position: absolute;
        right: 3px;
        bottom: 1px;
        border-style: solid;
        border-width: 0 0 4px 4px;
        border-color: transparent transparent #bbb transparent;
    }
`;

const TypeT = styled.span`
    display: flex;
    flex-direction: column;
    align-items: center;
    color: #b8b8b8;
    font-family: "Liberation Serif", serif;
    font-size: 17px;
    font-weight: 700;
    line-height: 14px;
`;

const TypeLine = styled.span`
    width: 15px;
    height: 1px;
    margin-top: 2px;
    background: #b8b8b8;
`;

const GradientBox = styled.span`
    width: 16px;
    height: 15px;
    background: linear-gradient(90deg, #bcbcbc, #4c4c4c 60%, #8a8a8a);
`;

const FeatherBox = styled.span`
    width: 16px;
    height: 15px;
    background: linear-gradient(180deg, #7a7a7a, #3c3c3c 45%, #b0b0b0);
`;

const SmallRow = styled.div`
    display: flex;
    align-items: center;
    gap: 7px;
    height: 20px;
`;

const DefaultColors = styled.span`
    position: relative;
    display: block;
    width: 12px;
    height: 12px;
`;

const MiniFill = styled.span`
    position: absolute;
    left: 0;
    top: 0;
    width: 7px;
    height: 7px;
    background: #eee;
    border: 1px solid #e8262b;
`;

const MiniStroke = styled.span`
    position: absolute;
    right: 0;
    bottom: 0;
    width: 8px;
    height: 8px;
    background: #eee;
    border: 2px solid #222;
`;

const SwatchStack = styled.div`
    position: relative;
    flex: none;
    width: 30px;
    height: 30px;
`;

const SwatchFront = styled.span`
    position: absolute;
    left: 0;
    top: 0;
`;

const SwatchBack = styled.span`
    position: absolute;
    right: 0;
    bottom: 0;
`;

const FormatRow = styled.div`
    display: flex;
    align-items: center;
    gap: 8px;
    height: 15px;
    margin-top: 5px;
`;

const FormatBtn = styled.span`
    display: flex;
    align-items: center;
    justify-content: center;
    width: 15px;
    height: 14px;
    background: #1c1c1c;
    border-radius: 2px;
`;

const FormatT = styled.span`
    color: #b8b8b8;
    font-family: "Liberation Serif", serif;
    font-size: 12px;
    font-weight: 700;
`;

const WellBtn = styled.div`
    position: relative;
    display: flex;
    align-items: center;
    justify-content: center;
    flex: none;
    width: 29px;
    height: 23px;
    margin-top: ${(p) => p.$mt || 5}px;
    background: #1c1c1c;
    border-radius: 3px;
    &::after {
        content: "";
        position: absolute;
        right: 2px;
        bottom: 2px;
        border-style: solid;
        border-width: 0 0 4px 4px;
        border-color: transparent transparent #bbb transparent;
    }
`;

const Center = styled.div`
    display: flex;
    flex-direction: column;
    flex: 1;
    min-width: 0;
`;

const TabRow = styled.div`
    flex: none;
    height: 20px;
    background: #212121;
`;

const Tab = styled.div`
    display: flex;
    align-items: center;
    width: 266px;
    height: 20px;
    padding-left: 13px;
    background: #2b2b2b;
    color: #e0e0e0;
    font-size: 10.7px;
    font-weight: 600;
    white-space: nowrap;
`;

const TabClose = styled.span`
    width: 18px;
    color: #ccc;
    font-size: 14px;
    font-weight: 400;
`;

const CanvasRow = styled.div`
    display: flex;
    flex: 1;
    min-height: 0;
`;

const Pasteboard = styled.div`
    flex: 1;
    padding-left: 101px;
    background: #b2b2b2;
`;

const Page = styled.div`
    width: 846px;
    height: 680px;
    background: #fff;
    border-right: 1px solid #555;
    border-bottom: 1px solid #555;
    box-shadow: -1px 0 0 #999;
`;

const PageText = styled.div`
    height: 20px;
    padding: 3px 50px 0 0;
    color: #000;
    font-family: "Liberation Serif", serif;
    font-size: 13.7px;
    line-height: 18px;
    white-space: nowrap;
`;

const Shapes = styled.div`
    display: flex;
    align-items: flex-start;
    gap: 66px;
    padding: 136px 0 0 155px;
`;

const Shape = styled.div`
    width: ${(p) => p.$w}px;
    height: ${(p) => p.$h}px;
    background: #0095df;
`;

const VScroll = styled.div`
    display: flex;
    flex-direction: column;
    align-items: center;
    flex: none;
    width: 18px;
    padding: 4px 0 6px;
    background: #222;
`;

const VThumb = styled.div`
    flex: none;
    width: 15px;
    height: 177px;
    margin: 135px 0 auto;
    background: #3a3a3a;
    border-radius: 8px;
`;

const StatusBar = styled.div`
    display: flex;
    align-items: center;
    flex: none;
    height: 17px;
    padding-right: 2px;
    background: #232323;
`;

const StatusLeft = styled.div`
    display: flex;
    align-items: center;
    flex: none;
    width: 449px;
    height: 17px;
    padding-left: 12px;
    background: #2b2b2b;
`;

const StatusGap = styled.span`
    flex: none;
    width: ${(p) => p.$w}px;
`;

const PageField = styled.div`
    display: flex;
    align-items: center;
    justify-content: space-between;
    flex: none;
    width: 92px;
    height: 16px;
    padding-left: 5px;
    border: 1px solid #444;
    border-radius: 2px;
    color: #e0e0e0;
    font-size: 11px;
`;

const PageCaret = styled.span`
    display: flex;
    align-items: center;
    justify-content: center;
    width: 18px;
    height: 100%;
    border-left: 1px solid #444;
`;

const StatusDim = styled.span`
    margin-left: 15px;
    color: #858585;
    font-size: 10.4px;
    white-space: nowrap;
`;

const StatusDot = styled.span`
    flex: none;
    width: 10px;
    height: 10px;
    border-radius: 50%;
    background: #4a4a4a;
`;

const StatusStrong = styled.span`
    margin-left: 6px;
    color: #e6e6e6;
    font-size: 10.3px;
    font-weight: 600;
    white-space: nowrap;
`;

const ScrollLeft = styled.span`
    display: flex;
    margin-left: 4px;
`;

const HTrack = styled.div`
    flex: 1;
    padding-left: 241px;
`;

const HThumb = styled.div`
    width: 504px;
    height: 13px;
    background: #3a3a3a;
    border-radius: 7px;
`;

const SplitIcon = styled.span`
    display: flex;
    margin: 0 8px 0 5px;
`;

const ResizeDots = styled.span`
    flex: none;
    width: 10px;
    height: 10px;
    background-image: radial-gradient(#666 0.7px, transparent 0.8px);
    background-size: 3px 3px;
`;

const Dock = styled.div`
    display: flex;
    flex-direction: column;
    flex: none;
    width: 38px;
    background: #2b2b2b;
`;

const DockHead = styled.div`
    display: flex;
    align-items: center;
    justify-content: flex-end;
    height: 11px;
    padding-right: 4px;
    background: #212121;
`;

const DockGroup = styled.div`
    flex: none;
    height: ${(p) => p.$h}px;
    border-bottom: 1px solid #1f1f1f;
    border-left: 1px solid #1f1f1f;
`;

const DockIcons = styled.div`
    display: flex;
    flex-direction: column;
    align-items: center;
`;

const DockIcon = styled.div`
    display: flex;
    align-items: center;
    justify-content: center;
    flex: none;
    width: 28px;
    height: 28px;
`;

const ItalicA = styled.span`
    color: #c4c4c4;
    font-family: "Liberation Serif", serif;
    font-size: 22px;
    font-style: italic;
    line-height: 1;
`;

const DockGradient = styled.span`
    width: 17px;
    height: 12px;
    border: 1px solid #bbb;
    background: linear-gradient(90deg, #bcbcbc, #3c3c3c);
`;

const FxMark = styled.span`
    color: #c0c0c0;
    font-family: "Liberation Serif", serif;
    font-size: 20px;
    font-style: italic;
    line-height: 1;
`;

const DockGlyph = styled.span`
    color: #c4c4c4;
    font-family: ${(p) => (p.$sans ? '"Liberation Sans", sans-serif' : '"Liberation Serif", serif')};
    font-size: ${(p) => (p.$small ? 16 : 20)}px;
    line-height: 1;
`;

const DockCombo = styled.span`
    display: flex;
    align-items: flex-end;
`;

const ScriptBox = styled.span`
    display: flex;
    align-items: center;
    justify-content: center;
    width: 27px;
    height: 23px;
    background: #1c1c1c;
    border: 1px solid #262626;
    border-radius: 3px;
`;

const BigG = styled.span`
    color: #d0d0d0;
    font-family: "Liberation Sans", sans-serif;
    font-size: 24px;
    font-weight: 700;
    line-height: 20px;
`;

const ScriptsPanel = styled.div`
    position: absolute;
    left: 1399px;
    top: 666px;
    display: flex;
    flex-direction: column;
    width: 241px;
    height: 321px;
    background: #2b2b2b;
    box-shadow: 0 0 0 1px #1a1a1a;
`;

const PanelHead = styled.div`
    display: flex;
    align-items: flex-end;
    justify-content: space-between;
    flex: none;
    height: 24px;
    background: #1f1f1f;
`;

const PanelTab = styled.div`
    display: flex;
    align-items: center;
    gap: 5px;
    width: 69px;
    height: 20px;
    padding-left: 8px;
    background: #2b2b2b;
    color: #e8e8e8;
    font-size: 11.5px;
    font-weight: 700;
`;

const PanelSort = styled.span`
    display: flex;
    flex-direction: column;
    gap: 2px;
`;

const PanelActions = styled.div`
    display: flex;
    align-items: center;
    gap: 6px;
    height: 20px;
    padding-right: 6px;
`;

const PanelDivider = styled.span`
    width: 1px;
    height: 11px;
    background: #999;
`;

const PanelBody = styled.div`
    display: flex;
    flex: none;
    height: 265px;
`;

const ScriptList = styled.div`
    flex: none;
    width: 226px;
    margin-left: 2px;
    border-top: 1px solid #3a3a3a;
`;

const ScriptRow = styled.div`
    display: flex;
    align-items: center;
    height: 22px;
    background: ${(p) => (p.$sel ? "#30485f" : "transparent")};
    border-bottom: 1px solid #383838;
`;

const RowCaret = styled.span`
    display: flex;
    flex: none;
    width: 67px;
    padding-left: 6px;
`;

const FolderSlot = styled.span`
    display: flex;
    flex: none;
    width: 19px;
`;

const FolderName = styled.span`
    color: #dcdcdc;
    font-size: 10.3px;
    font-weight: 600;
`;

const ScriptSlot = styled.span`
    display: flex;
    flex: none;
    width: 107px;
    padding-left: 87px;
    flex-shrink: 0;
`;

const ScriptName = styled.span`
    color: #e4e4e4;
    font-size: 10.3px;
    font-weight: 600;
    white-space: nowrap;
`;

const ListScroll = styled.div`
    display: flex;
    flex-direction: column;
    align-items: center;
    flex: none;
    width: 12px;
    padding: 4px 0 6px;
    margin-left: 1px;
`;

const ListThumb = styled.div`
    flex: none;
    width: 10px;
    height: 41px;
    margin: 18px 0 auto;
    background: #3e3e3e;
    border-radius: 5px;
`;

const PanelBlank = styled.div`
    flex: 1;
`;

const PanelFoot = styled.div`
    display: flex;
    align-items: center;
    justify-content: center;
    flex: none;
    height: 8px;
    border-top: 2px solid #1a1a1a;
`;

const Cursor = styled.div`
    position: absolute;
    left: 426px;
    top: 253px;
    line-height: 0;
`;
